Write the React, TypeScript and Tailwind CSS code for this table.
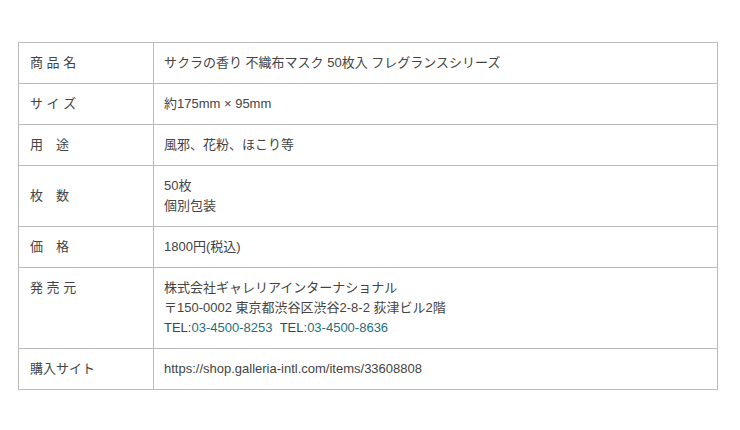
const rows: { label: string; value: React.ReactNode; top?: boolean }[] = [
  { label: "商 品 名", value: "サクラの香り 不織布マスク 50枚入 フレグランスシリーズ" },
  { label: "サ イ ズ", value: "約175mm × 95mm" },
  { label: "用　途", value: "風邪、花粉、ほこり等" },
  {
    label: "枚　数",
    value: (
      <>
        50枚
        <br />
        個別包装
      </>
    ),
  },
  { label: "価　格", value: "1800円(税込)" },
  {
    label: "発 売 元",
    top: true,
    value: (
      <>
        株式会社ギャレリアインターナショナル
        <br />
        〒150-0002 東京都渋谷区渋谷2-8-2 荻津ビル2階
        <br />
        TEL:<span className="text-[#22707f]">03-4500-8253</span>
        {"\u00a0\u00a0"}TEL:<span className="text-[#22707f]">03-4500-8636</span>
      </>
    ),
  },
  { label: "購入サイト", value: "https://shop.galleria-intl.com/items/33608808" },
];

export default function App() {
  return (
    <div
      className="bg-white w-[740px] h-[430px] pt-[42px] pl-[18px]"
      style={{ fontFamily: '"Liberation Sans", "Noto Sans CJK JP", sans-serif' }}
    >
      <table className="w-[700px] border-collapse text-[13px] leading-[20px] text-[#444]">
        <tbody>
          {rows.map((row) => (
            <tr key={row.label}>
              <td
                className={`w-[135px] border border-[#bbb] pl-[11px] pr-2 py-[10px] ${
                  row.top ? "align-top" : "align-middle"
                }`}
              >
                {row.label}
              </td>
              <td className="border border-[#bbb] pl-[10px] pr-2 py-[10px] align-middle">
                {row.value}
              </td>
            </tr>
          ))}
        </tbody>
      </table>
    </div>
  );
}
